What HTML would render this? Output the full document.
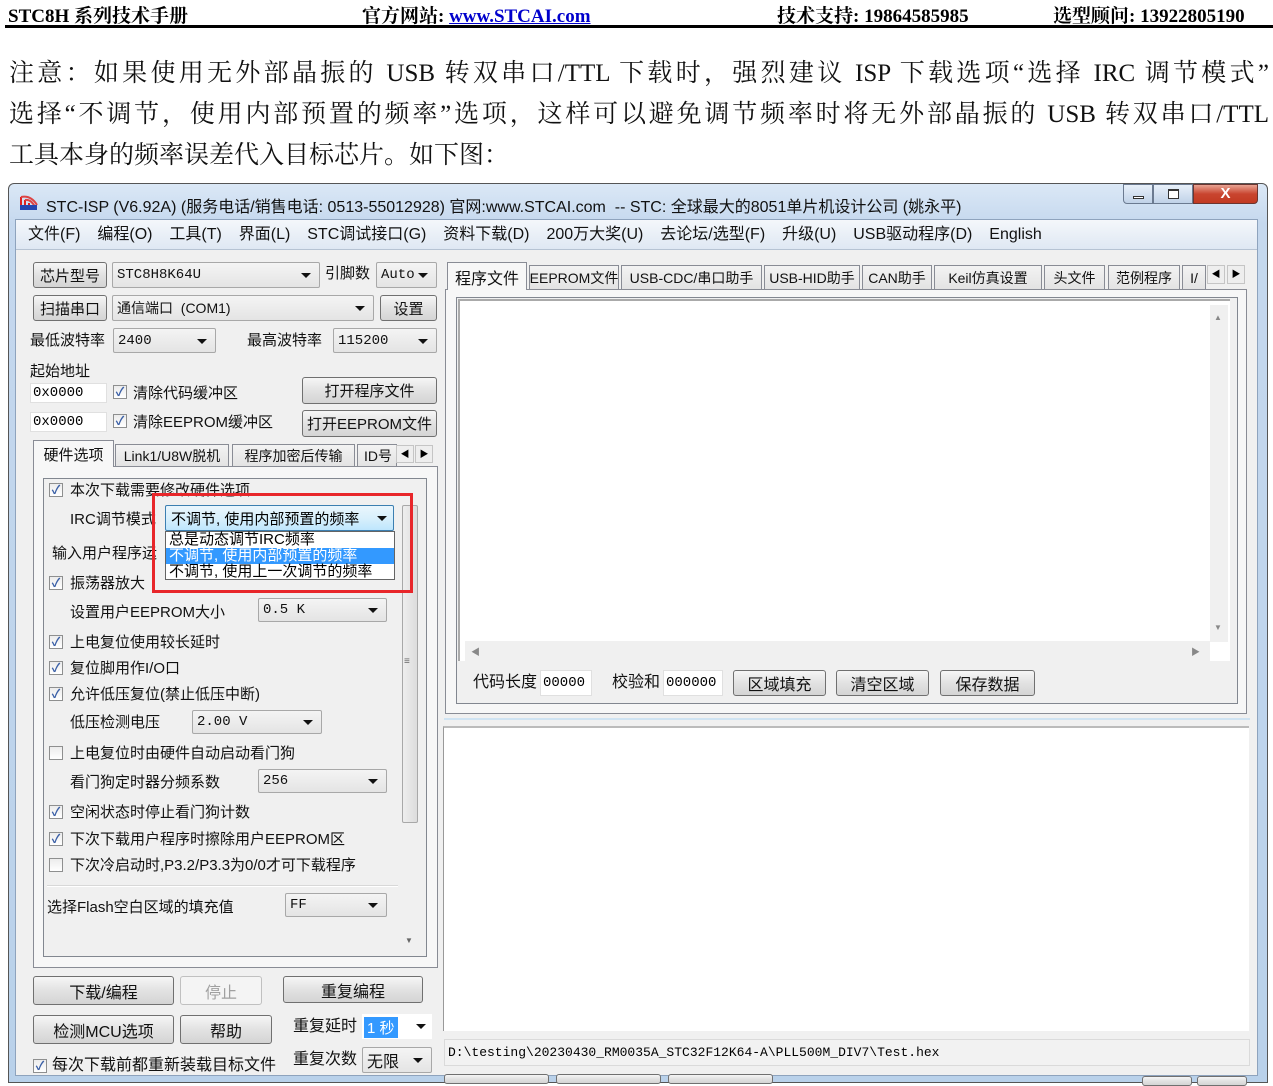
<!DOCTYPE html>
<html><head><meta charset="utf-8"><style>
*{box-sizing:border-box;margin:0;padding:0}
body{width:1273px;height:1079px;overflow:hidden;background:#fff;position:relative;font-family:"Liberation Sans","Noto Sans CJK SC",sans-serif;}
.a{position:absolute;white-space:nowrap}
.ui{font-size:15px;color:#111;line-height:1}
.btn{position:absolute;border:1px solid #707070;border-radius:3px;background:linear-gradient(#f6f6f6,#e2e2e2 50%,#d4d4d4);text-align:center;font-size:15px;color:#111;display:flex;align-items:center;justify-content:center;white-space:nowrap}
.cb{position:absolute;border:1px solid #a8a8a8;border-radius:2px;background:linear-gradient(#f4f4f4,#e4e4e4);font-size:14px;color:#111;padding-left:4px;display:flex;align-items:center;font-family:"Liberation Mono","Noto Sans CJK SC",monospace;white-space:nowrap}
.cb:after{content:"";position:absolute;right:8px;top:50%;margin-top:-2px;border-left:5px solid transparent;border-right:5px solid transparent;border-top:5px solid #111}
.chk{position:absolute;width:14px;height:14px;border:1px solid #8e8f8f;background:linear-gradient(#ececec,#fff);font-size:12px;line-height:12px;text-align:center;color:#3a5fa6;font-weight:bold}
.tab{position:absolute;border:1px solid #898c95;border-bottom:none;background:linear-gradient(#f3f3f3,#e3e3e3);font-size:14px;display:flex;align-items:center;justify-content:center;color:#111;white-space:nowrap;overflow:hidden}
.inp{position:absolute;background:#fff;border:1px solid #e0e0e0;font-size:14px;display:flex;align-items:center;padding-left:2px;font-family:"Liberation Mono","Noto Sans CJK SC",monospace}
.p{position:absolute;left:9px;width:1260px;font:25px/41px 'Liberation Serif','Noto Serif CJK SC',serif;color:#111;white-space:nowrap}
.j{text-align:justify;text-align-last:justify;white-space:normal}
</style></head><body>
<!-- header -->
<div class="a" style="left:8px;top:1px;font:bold 19px 'Liberation Serif','Noto Serif CJK SC',serif">STC8H 系列技术手册</div>
<div class="a" style="left:362px;top:1px;font:bold 19px 'Liberation Serif','Noto Serif CJK SC',serif">官方网站: <span style="color:#00c;text-decoration:underline">www.STCAI.com</span></div>
<div class="a" style="left:777px;top:1px;font:bold 19px 'Liberation Serif','Noto Serif CJK SC',serif">技术支持: 19864585985</div>
<div class="a" style="left:1053px;top:1px;font:bold 19px 'Liberation Serif','Noto Serif CJK SC',serif">选型顾问: 13922805190</div>
<div class="a" style="left:5px;top:25px;width:1268px;height:3px;background:#000"></div>
<div class="p j" style="top:53px">注意：如果使用无外部晶振的 USB 转双串口/TTL 下载时，强烈建议 ISP 下载选项“选择 IRC 调节模式”</div>
<div class="p j" style="top:94px">选择“不调节，使用内部预置的频率”选项，这样可以避免调节频率时将无外部晶振的 USB 转双串口/TTL</div>
<div class="p" style="top:135px">工具本身的频率误差代入目标芯片。如下图：</div>

<!-- window -->
<div class="a" style="left:8px;top:183px;width:1260px;height:900px;border:1px solid #555;border-radius:6px 6px 0 0;background:linear-gradient(#dbe8f6,#c5d8ee 40px,#b9d1ea)"></div>
<div class="a" style="left:19px;top:193px;width:20px;height:18px">
<svg width="20" height="18"><path d="M2 16 V4 M6 16 V7 M10 16 V10" stroke="#d22" stroke-width="2"/><path d="M2 4 Q12 2 18 12 M6 7 Q12 6 16 14" stroke="#d44" fill="none" stroke-width="2"/><rect x="1" y="12" width="17" height="5" fill="#2446b0"/></svg></div>
<div class="a" style="left:46px;top:193px;font-size:16px;color:#111">STC-ISP (V6.92A) (服务电话/销售电话: 0513-55012928) 官网:www.STCAI.com &nbsp;-- STC: 全球最大的8051单片机设计公司 (姚永平)</div>
<div class="a" style="left:1123px;top:184px;width:30px;height:20px;border:1px solid #6b7a90;border-radius:0 0 0 4px;background:linear-gradient(#e8f0fa,#c0d2e8)"><div style="position:absolute;left:9px;top:11px;width:11px;height:3px;border:1px solid #333;background:#fff"></div></div>
<div class="a" style="left:1153px;top:184px;width:40px;height:20px;border:1px solid #6b7a90;background:linear-gradient(#e8f0fa,#c0d2e8)"><div style="position:absolute;left:14px;top:4px;width:11px;height:10px;border:1px solid #333;border-top-width:2px;background:#fff"></div></div>
<div class="a" style="left:1193px;top:184px;width:65px;height:20px;border:1px solid #6b3530;border-radius:0 0 4px 0;background:linear-gradient(#e8a393,#c9452f 50%,#c23a22);color:#fff;font:bold 15px/18px 'Liberation Sans';text-align:center">X</div>

<div class="a" style="left:15px;top:219px;width:1243px;height:857px;background:#f0f0f0;border:1px solid #8ea3bd"></div>
<div class="a" style="left:16px;top:220px;width:1241px;height:30px;background:linear-gradient(#f4f7fb,#dfe8f3);border-bottom:1px solid #b6c3d3"></div>
<div class="a ui" style="left:28px;top:227px;font-size:16px;word-spacing:1.2px">文件(F)&nbsp;&nbsp; 编程(O)&nbsp;&nbsp; 工具(T)&nbsp;&nbsp; 界面(L)&nbsp;&nbsp; STC调试接口(G)&nbsp;&nbsp; 资料下载(D)&nbsp;&nbsp; 200万大奖(U)&nbsp;&nbsp; 去论坛/选型(F)&nbsp;&nbsp; 升级(U)&nbsp;&nbsp; USB驱动程序(D)&nbsp;&nbsp; English</div>

<!-- left top controls -->
<div class="btn" style="left:33px;top:262px;width:74px;height:26px">芯片型号</div>
<div class="cb" style="left:112px;top:262px;width:208px;height:26px">STC8H8K64U</div>
<div class="a ui" style="left:325px;top:266px">引脚数</div>
<div class="cb" style="left:376px;top:262px;width:61px;height:26px">Auto</div>
<div class="btn" style="left:33px;top:295px;width:74px;height:26px">扫描串口</div>
<div class="cb" style="left:112px;top:295px;width:262px;height:26px;font-family:'Liberation Sans','Noto Sans CJK SC'">通信端口 &nbsp;(COM1)</div>
<div class="btn" style="left:380px;top:295px;width:57px;height:26px">设置</div>
<div class="a ui" style="left:30px;top:333px">最低波特率</div>
<div class="cb" style="left:113px;top:328px;width:103px;height:25px">2400</div>
<div class="a ui" style="left:247px;top:333px">最高波特率</div>
<div class="cb" style="left:333px;top:328px;width:104px;height:25px">115200</div>
<div class="a ui" style="left:30px;top:364px">起始地址</div>
<div class="inp" style="left:30px;top:383px;width:77px;height:20px">0x0000</div>
<div class="chk" style="left:113px;top:385px">✓</div><div class="a ui" style="left:133px;top:386px">清除代码缓冲区</div>
<div class="btn" style="left:302px;top:377px;width:135px;height:27px">打开程序文件</div>
<div class="inp" style="left:30px;top:412px;width:77px;height:20px">0x0000</div>
<div class="chk" style="left:113px;top:414px">✓</div><div class="a ui" style="left:133px;top:415px">清除EEPROM缓冲区</div>
<div class="btn" style="left:302px;top:410px;width:135px;height:27px">打开EEPROM文件</div>

<!-- left tabs -->
<div class="a" style="left:33px;top:466px;width:405px;height:502px;border:1px solid #898c95;background:#f7f7f7"></div>
<div class="tab" style="left:33px;top:440px;width:81px;height:27px;background:#f7f7f7;font-size:15px">硬件选项</div>
<div class="tab" style="left:115px;top:444px;width:114px;height:22px">Link1/U8W脱机</div>
<div class="tab" style="left:232px;top:444px;width:123px;height:22px">程序加密后传输</div>
<div class="tab" style="left:357px;top:444px;width:40px;height:22px;justify-content:flex-start;padding-left:6px">ID号</div>
<div class="a" style="left:396px;top:445px;width:18px;height:18px;border:1px solid #c5c5c5;background:#eee;font-size:9px;text-align:center;line-height:16px">◀</div>
<div class="a" style="left:415px;top:445px;width:18px;height:18px;border:1px solid #c5c5c5;background:#eee;font-size:9px;text-align:center;line-height:16px">▶</div>
<div class="a" style="left:43px;top:478px;width:384px;height:479px;border:1px solid #828790;background:#f0f0f0"></div>
<div class="a" style="left:400px;top:480px;width:20px;height:475px;background:#f0f0f0"></div>
<div class="a" style="left:402px;top:505px;width:16px;height:318px;border:1px solid #a8a8a8;border-radius:2px;background:linear-gradient(90deg,#eee,#dcdcdc)"></div>
<div class="a" style="left:404px;top:656px;font-size:10px;color:#666">≡</div>
<div class="a" style="left:405px;top:936px;font-size:8px;color:#666">▼</div>

<div class="chk" style="left:49px;top:483px">✓</div><div class="a ui" style="left:70px;top:483px">本次下载需要修改硬件选项</div>
<div class="a ui" style="left:70px;top:512px">IRC调节模式</div>
<div class="a" style="left:165px;top:505px;width:229px;height:26px;border:1px solid #3c7fb1;border-radius:2px;background:linear-gradient(#eaf6fd,#d9f0fc 50%,#bee6fd);font-size:15px;padding-left:5px;display:flex;align-items:center">不调节, 使用内部预置的频率<span style="position:absolute;right:6px;top:10px;border-left:5px solid transparent;border-right:5px solid transparent;border-top:5px solid #111"></span></div>
<div class="a ui" style="left:52px;top:546px">输入用户程序运</div>
<div class="a" style="left:165px;top:531px;width:230px;height:49px;border:1px solid #646464;background:#fff;font-size:15px;line-height:16px">
<div style="padding-left:3px">总是动态调节IRC频率</div>
<div style="padding-left:3px;background:#3399ff;color:#fff">不调节, 使用内部预置的频率</div>
<div style="padding-left:3px">不调节, 使用上一次调节的频率</div></div>
<div class="chk" style="left:49px;top:576px">✓</div><div class="a ui" style="left:70px;top:576px">振荡器放大</div>
<div class="a ui" style="left:70px;top:605px">设置用户EEPROM大小</div>
<div class="cb" style="left:258px;top:598px;width:129px;height:24px">0.5 K</div>
<div class="chk" style="left:49px;top:635px">✓</div><div class="a ui" style="left:70px;top:635px">上电复位使用较长延时</div>
<div class="chk" style="left:49px;top:661px">✓</div><div class="a ui" style="left:70px;top:661px">复位脚用作I/O口</div>
<div class="chk" style="left:49px;top:687px">✓</div><div class="a ui" style="left:70px;top:687px">允许低压复位(禁止低压中断)</div>
<div class="a ui" style="left:70px;top:715px">低压检测电压</div>
<div class="cb" style="left:192px;top:710px;width:130px;height:24px">2.00 V</div>
<div class="chk" style="left:49px;top:746px"></div><div class="a ui" style="left:70px;top:746px">上电复位时由硬件自动启动看门狗</div>
<div class="a ui" style="left:70px;top:775px">看门狗定时器分频系数</div>
<div class="cb" style="left:258px;top:769px;width:129px;height:24px">256</div>
<div class="chk" style="left:49px;top:805px">✓</div><div class="a ui" style="left:70px;top:805px">空闲状态时停止看门狗计数</div>
<div class="chk" style="left:49px;top:832px">✓</div><div class="a ui" style="left:70px;top:832px">下次下载用户程序时擦除用户EEPROM区</div>
<div class="chk" style="left:49px;top:858px"></div><div class="a ui" style="left:70px;top:858px">下次冷启动时,P3.2/P3.3为0/0才可下载程序</div>
<div class="a" style="left:47px;top:885px;width:351px;height:2px;background:#d8d8d8;border-bottom:1px solid #fff"></div>
<div class="a ui" style="left:47px;top:900px">选择Flash空白区域的填充值</div>
<div class="cb" style="left:285px;top:893px;width:102px;height:24px">FF</div>
<div class="a" style="left:152px;top:493px;width:261px;height:100px;border:3px solid #e8262a"></div>

<!-- left bottom -->
<div class="btn" style="left:33px;top:976px;width:141px;height:29px;font-size:16px">下载/编程</div>
<div class="btn" style="left:180px;top:976px;width:82px;height:29px;color:#a0a0a0;border-color:#c0c0c0;background:#f4f4f4;font-size:16px">停止</div>
<div class="btn" style="left:283px;top:976px;width:140px;height:27px;font-size:16px">重复编程</div>
<div class="btn" style="left:33px;top:1015px;width:141px;height:29px;font-size:16px">检测MCU选项</div>
<div class="btn" style="left:180px;top:1015px;width:92px;height:29px;font-size:16px">帮助</div>
<div class="a ui" style="left:293px;top:1019px;font-size:16px">重复延时</div>
<div class="a" style="left:362px;top:1014px;width:70px;height:25px;background:#fff"><span style="position:absolute;left:2px;top:3px;background:#3399ff;color:#fff;font-size:15px;padding:0 3px">1 秒</span><span style="position:absolute;right:6px;top:10px;border-left:5px solid transparent;border-right:5px solid transparent;border-top:5px solid #111"></span></div>
<div class="chk" style="left:33px;top:1059px">✓</div><div class="a ui" style="left:52px;top:1058px;font-size:16px">每次下载前都重新装载目标文件</div>
<div class="a ui" style="left:293px;top:1052px;font-size:16px">重复次数</div>
<div class="cb" style="left:362px;top:1047px;width:70px;height:26px;font-size:16px;font-family:'Liberation Sans','Noto Sans CJK SC'">无限</div>

<!-- right tabs -->
<div class="a" style="left:445px;top:289px;width:802px;height:425px;border:1px solid #898c95;background:#f7f7f7"></div>
<div class="tab" style="left:447px;top:262px;width:80px;height:28px;background:#f7f7f7;font-size:16px">程序文件</div>
<div class="tab" style="left:529px;top:265px;width:90px;height:24px">EEPROM文件</div>
<div class="tab" style="left:621px;top:265px;width:141px;height:24px">USB-CDC/串口助手</div>
<div class="tab" style="left:764px;top:265px;width:96px;height:24px">USB-HID助手</div>
<div class="tab" style="left:862px;top:265px;width:70px;height:24px">CAN助手</div>
<div class="tab" style="left:934px;top:265px;width:108px;height:24px">Keil仿真设置</div>
<div class="tab" style="left:1044px;top:265px;width:61px;height:24px">头文件</div>
<div class="tab" style="left:1108px;top:265px;width:72px;height:24px">范例程序</div>
<div class="tab" style="left:1182px;top:265px;width:24px;height:24px">I/</div>
<div class="a" style="left:1207px;top:265px;width:18px;height:19px;border:1px solid #c5c5c5;background:#eee;font-size:9px;text-align:center;line-height:17px">◀</div>
<div class="a" style="left:1227px;top:265px;width:18px;height:19px;border:1px solid #c5c5c5;background:#eee;font-size:9px;text-align:center;line-height:17px">▶</div>
<div class="a" style="left:456px;top:297px;width:782px;height:407px;border:1px solid #828790;background:#f0f0f0"></div>
<div class="a" style="left:458px;top:299px;width:772px;height:362px;border:2px solid #aaa;border-right:none;border-bottom:none;background:#fff"></div>
<div class="a" style="left:1210px;top:305px;width:18px;height:337px;background:#f0f0f0"><span style="position:absolute;left:4px;top:8px;font-size:8px;color:#888">▲</span><span style="position:absolute;left:4px;top:318px;font-size:8px;color:#888">▼</span></div>
<div class="a" style="left:465px;top:641px;width:745px;height:20px;background:#f0f0f0"><span style="position:absolute;left:6px;top:4px;font-size:9px;color:#888">◀</span><span style="position:absolute;left:726px;top:4px;font-size:9px;color:#888">▶</span></div>
<div class="a ui" style="left:473px;top:675px;font-size:16px">代码长度</div>
<div class="inp" style="left:540px;top:670px;width:52px;height:26px">00000</div>
<div class="a ui" style="left:612px;top:675px;font-size:16px">校验和</div>
<div class="inp" style="left:663px;top:670px;width:60px;height:26px">000000</div>
<div class="btn" style="left:733px;top:670px;width:93px;height:26px;font-size:16px">区域填充</div>
<div class="btn" style="left:836px;top:670px;width:93px;height:26px;font-size:16px">清空区域</div>
<div class="btn" style="left:940px;top:670px;width:95px;height:26px;font-size:16px">保存数据</div>
<div class="a" style="left:444px;top:718px;width:806px;height:2px;background:#cfe3f2"></div>
<div class="a" style="left:443px;top:726px;width:806px;height:305px;background:#fff;border-left:1px solid #999;border-top:2px solid #bbb"></div>
<div class="a" style="left:444px;top:1039px;width:806px;height:27px;background:#f2f2f2;border:1px solid #dadada;font:13px 'Liberation Mono','Noto Sans CJK SC',monospace;padding:5px 3px">D:\testing\20230430_RM0035A_STC32F12K64-A\PLL500M_DIV7\Test.hex</div>
<div class="btn" style="left:444px;top:1074px;width:105px;height:10px"></div>
<div class="btn" style="left:556px;top:1074px;width:105px;height:10px"></div>
<div class="btn" style="left:668px;top:1074px;width:105px;height:10px"></div>
<div class="btn" style="left:1142px;top:1076px;width:50px;height:10px"></div>
<div class="btn" style="left:1197px;top:1076px;width:50px;height:10px"></div>
</body></html>
